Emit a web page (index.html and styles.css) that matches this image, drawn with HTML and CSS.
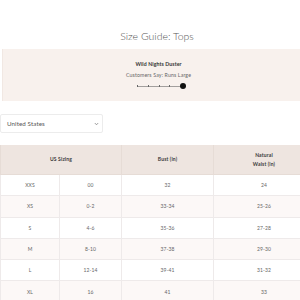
FILE: index.html
```html
<!DOCTYPE html>
<html>
<head>
<meta charset="utf-8">
<link rel="stylesheet" href="styles.css">
</head>
<body>
<div class="page">
  <h1 class="title">Size Guide: Tops</h1>
  <section class="fit">
    <div class="fit-name">Wild Nights Duster</div>
    <div class="fit-say">Customers Say: Runs Large</div>
    <div class="scale">
      <span class="tick"></span><span class="tick"></span><span class="tick"></span><span class="tick"></span><span class="dot"></span>
    </div>
  </section>
  <div class="select">
    <span>United States</span>
    <svg class="chev" width="5" height="4" viewBox="0 0 5 4"><path d="M0.8 1 L2.5 2.8 L4.2 1" fill="none" stroke="#777" stroke-width="0.7"/></svg>
  </div>
  <table class="sizes">
    <colgroup><col class="c1"><col class="c2"><col class="c3"><col class="c4"></colgroup>
    <thead>
      <tr><th colspan="2">US Sizing</th><th>Bust (in)</th><th>Natural<br>Waist (in)</th></tr>
    </thead>
    <tbody>
      <tr><td>XXS</td><td>00</td><td>32</td><td>24</td></tr>
      <tr><td>XS</td><td>0-2</td><td>33-34</td><td>25-26</td></tr>
      <tr><td>S</td><td>4-6</td><td>35-36</td><td>27-28</td></tr>
      <tr><td>M</td><td>8-10</td><td>37-38</td><td>29-30</td></tr>
      <tr><td>L</td><td>12-14</td><td>39-41</td><td>31-32</td></tr>
      <tr><td>XL</td><td>16</td><td>41</td><td>33</td></tr>
    </tbody>
  </table>
</div>
</body>
</html>
```
FILE: styles.css
```css
html, body { margin: 0; padding: 0; overflow: hidden; background: #fff; }
body { font-family: Lato, "Open Sans", sans-serif; color: #444; }
.page { width: 314px; }
.title {
  margin: 29px 0 0;
  font-size: 10.5px;
  line-height: 14px;
  font-weight: 300;
  text-align: center;
  color: #555;
}
.fit {
  margin: 6px 0 0 2px;
  height: 52px;
  box-sizing: border-box;
  background: #f8f1ed;
  border-left: 1px solid #f1e8e3;
  display: flex;
  flex-direction: column;
  align-items: center;
  padding-top: 12px;
}
.fit-name { font-size: 5.2px; font-weight: 700; color: #333; line-height: 7px; letter-spacing: 0.1px; }
.fit-say { font-size: 5.2px; color: #666; line-height: 7px; margin-top: 4px; letter-spacing: 0.15px; }
.scale {
  margin-top: 4px;
  width: 49px;
  height: 6px;
  display: flex;
  align-items: center;
  justify-content: space-between;
  background: linear-gradient(#666, #666) center / 100% 0.6px no-repeat;
  margin-left: 6px;
}
.tick { width: 0.7px; height: 2.5px; background: #666; }
.dot { width: 6px; height: 6px; border-radius: 50%; background: #111; }
.select {
  margin: 13px 0 0 0;
  width: 103px;
  height: 19px;
  box-sizing: border-box;
  border: 1px solid #ececec;
  border-radius: 2px;
  display: flex;
  align-items: center;
  justify-content: space-between;
  padding: 0 3px 0 6px;
  font-size: 6.2px;
  color: #555;
  letter-spacing: 0.1px;
}
.sizes {
  margin-top: 12px;
  width: 314px;
  border-collapse: collapse;
  table-layout: fixed;
  font-size: 5px;
}
.c1 { width: 59px; }
.c2 { width: 62px; }
.c3 { width: 92px; }
.c4 { width: 101px; }
.sizes th {
  background: #eee5e0;
  height: 29px;
  padding: 0;
  font-weight: 700;
  color: #3a3a3a;
  line-height: 9px;
  border: 1px solid #e6dcd6;
  border-top: none;
  letter-spacing: 0.15px;
}
.sizes td {
  height: 20.3px;
  padding: 0;
  text-align: center;
  color: #666;
  border: 1px solid #eeeaea;
  letter-spacing: 0.1px;
}
.sizes tbody tr:nth-child(even) td { background: #fcf8f7; }
```
